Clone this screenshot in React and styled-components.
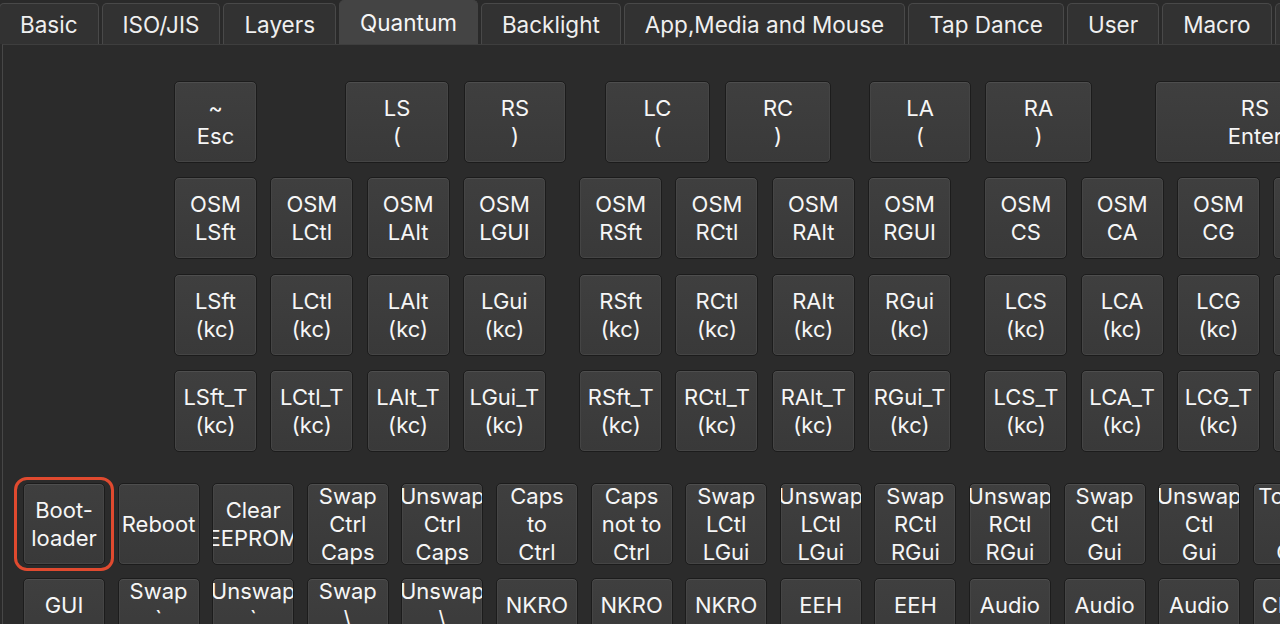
import React from "react";
import styled, { createGlobalStyle } from "styled-components";

const GlobalStyle = createGlobalStyle`
  html, body {
    margin: 0;
    padding: 0;
    background: #2a2a2a;
    font-family: Inter, "Noto Sans", "Liberation Sans", sans-serif;
    overflow: hidden;
  }
`;

const Window = styled.div`
  width: 1280px;
  height: 624px;
  overflow: hidden;
  display: flex;
  flex-direction: column;
  background: #2a2a2a;
`;

const TabBar = styled.div`
  display: flex;
  align-items: flex-end;
  height: 44px;
  gap: 3px;
  margin-left: -1px;
  flex: none;
`;

const Tab = styled.div`
  flex: none;
  box-sizing: border-box;
  height: ${(p) => (p.$active ? 44 : 41)}px;
  padding: 0 20px;
  display: flex;
  align-items: center;
  justify-content: center;
  font-size: 22.5px;
  color: ${(p) => (p.$active ? "#f6f6f6" : "#efefef")};
  background: ${(p) => (p.$active ? "#444444" : "#323232")};
  border: 1px solid ${(p) => (p.$active ? "#444444" : "#494949")};
  border-bottom: none;
  border-radius: 5px 5px 0 0;
  white-space: nowrap;
`;

const Panel = styled.div`
  flex: 1;
  margin-left: 2px;
  border-top: 1px solid #3e3e3e;
  border-left: 1px solid #474747;
  background: #2b2b2b;
  padding-top: 36px;
  overflow: hidden;
`;

const Block = styled.div`
  display: flex;
  flex-direction: column;
  gap: ${(p) => p.$rowGap}px;
  padding-left: ${(p) => p.$left}px;
  margin-top: ${(p) => p.$top || 0}px;
`;

const Row = styled.div`
  display: flex;
  gap: ${(p) => p.$gap || 0}px;
  flex-wrap: nowrap;
`;

const Key = styled.div`
  position: relative;
  flex: none;
  box-sizing: border-box;
  width: ${(p) => p.$w}px;
  height: 82px;
  margin-left: ${(p) => p.$skip || 0}px;
  border: 1px solid #1c1c1c;
  border-radius: 5px;
  background: linear-gradient(#3f3f3f, #393939);
  box-shadow: inset 0 1px 0 #4e4e4e, inset 0 0 0 1px #454545;
  display: flex;
  align-items: center;

  ${(p) =>
    p.$selected &&
    `
    &::after {
      content: "";
      position: absolute;
      inset: -7px -10px;
      border: 3px solid #e04a2f;
      border-radius: 13px;
      pointer-events: none;
    }
  `}
`;

const Label = styled.div`
  width: 100%;
  overflow: hidden;
  color: #f6f6f6;
  font-size: 22px;
  line-height: 28px;
`;

const Line = styled.div`
  display: flex;
  justify-content: center;
  white-space: pre;
`;

const tabs = [
  "Basic",
  "ISO/JIS",
  "Layers",
  "Quantum",
  "Backlight",
  "App,Media and Mouse",
  "Tap Dance",
  "User",
  "Macro",
  "Lighting",
];

const topRow = [
  { t: "~\nEsc", w: 83 },
  { t: "LS\n(", w: 104, skip: 88 },
  { t: "RS\n)", w: 102, skip: 15 },
  { t: "LC\n(", w: 105, skip: 39 },
  { t: "RC\n)", w: 106, skip: 15 },
  { t: "LA\n(", w: 102, skip: 38 },
  { t: "RA\n)", w: 107, skip: 14 },
  { t: "RS\nEnter", w: 200, skip: 63 },
];

const modRows = [
  ["OSM\nLSft", "OSM\nLCtl", "OSM\nLAlt", "OSM\nLGUI", "OSM\nRSft", "OSM\nRCtl", "OSM\nRAlt", "OSM\nRGUI", "OSM\nCS", "OSM\nCA", "OSM\nCG", "OSM\nSG"],
  ["LSft\n(kc)", "LCtl\n(kc)", "LAlt\n(kc)", "LGui\n(kc)", "RSft\n(kc)", "RCtl\n(kc)", "RAlt\n(kc)", "RGui\n(kc)", "LCS\n(kc)", "LCA\n(kc)", "LCG\n(kc)", "LSG\n(kc)"],
  ["LSft_T\n(kc)", "LCtl_T\n(kc)", "LAlt_T\n(kc)", "LGui_T\n(kc)", "RSft_T\n(kc)", "RCtl_T\n(kc)", "RAlt_T\n(kc)", "RGui_T\n(kc)", "LCS_T\n(kc)", "LCA_T\n(kc)", "LCG_T\n(kc)", "LSG_T\n(kc)"],
];

const magicRows = [
  ["Boot-\nloader", "Reboot", "Clear\nEEPROM", "Swap\nCtrl\nCaps", "Unswap\nCtrl\nCaps", "Caps\nto\nCtrl", "Caps\nnot to\nCtrl", "Swap\nLCtl\nLGui", "Unswap\nLCtl\nLGui", "Swap\nRCtl\nRGui", "Unswap\nRCtl\nRGui", "Swap\nCtl\nGui", "Unswap\nCtl\nGui", "Toggle\nCtl\nGui"],
  ["GUI\nToggle", "Swap\n`\nEsc", "Unswap\n`\nEsc", "Swap\n\\\nBspc", "Unswap\n\\\nBspc", "NKRO\nOn", "NKRO\nOff", "NKRO\nToggle", "EEH\nLeft", "EEH\nRight", "Audio\nOn", "Audio\nOff", "Audio\nToggle", "Clicky\nToggle"],
];

const KeyCap = ({ text, ...rest }) => (
  <Key {...rest}>
    <Label>
      {text.split("\n").map((l, i) => (
        <Line key={i}>{l}</Line>
      ))}
    </Label>
  </Key>
);

export default function App() {
  return (
    <Window>
      <GlobalStyle />
      <TabBar>
        {tabs.map((t) => (
          <Tab key={t} $active={t === "Quantum"}>
            {t}
          </Tab>
        ))}
      </TabBar>
      <Panel>
        <Block $left={171} $rowGap={14.3}>
          <Row>
            {topRow.map((k) => (
              <KeyCap key={k.t} text={k.t} $w={k.w} $skip={k.skip} />
            ))}
          </Row>
          {modRows.map((row, ri) => (
            <Row key={ri} $gap={13.3}>
              {row.map((t, i) => (
                <KeyCap key={t} text={t} $w={83} $skip={i === 4 || i === 8 ? 20 : 0} />
              ))}
            </Row>
          ))}
        </Block>
        <Block $left={20} $rowGap={13} $top={31}>
          {magicRows.map((row, ri) => (
            <Row key={ri} $gap={12.6}>
              {row.map((t, i) => (
                <KeyCap key={t} text={t} $w={82} $selected={ri === 0 && i === 0} />
              ))}
            </Row>
          ))}
        </Block>
      </Panel>
    </Window>
  );
}
